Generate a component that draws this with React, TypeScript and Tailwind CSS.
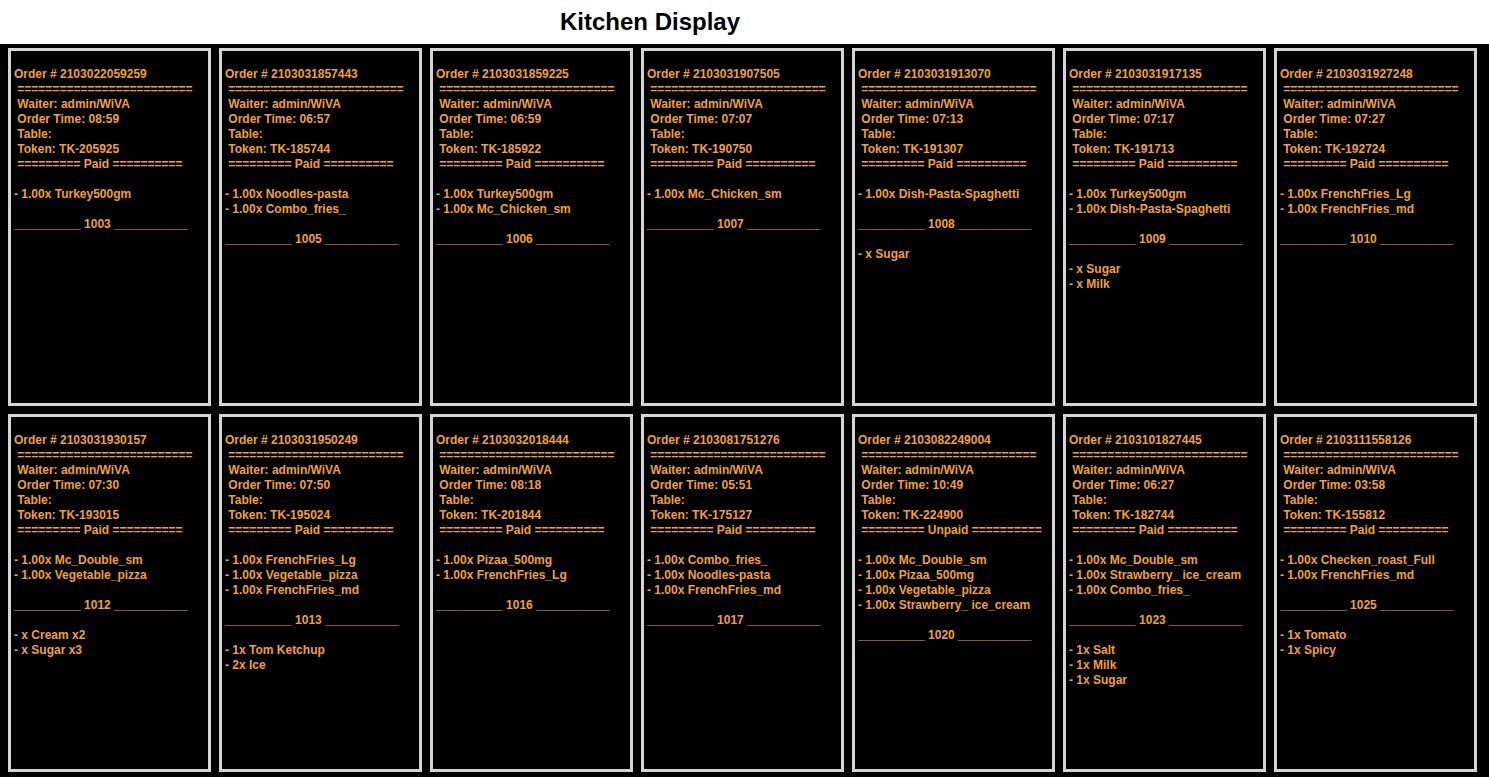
import React from 'react';

type Order = {
  id: string;
  time: string;
  token: string;
  paid: boolean;
  items: string[];
  number: number;
  extras?: string[];
};

const orders: Order[] = [
  { id: '2103022059259', time: '08:59', token: 'TK-205925', paid: true, items: ['Turkey500gm'], number: 1003 },
  { id: '2103031857443', time: '06:57', token: 'TK-185744', paid: true, items: ['Noodles-pasta', 'Combo_fries_'], number: 1005 },
  { id: '2103031859225', time: '06:59', token: 'TK-185922', paid: true, items: ['Turkey500gm', 'Mc_Chicken_sm'], number: 1006 },
  { id: '2103031907505', time: '07:07', token: 'TK-190750', paid: true, items: ['Mc_Chicken_sm'], number: 1007 },
  { id: '2103031913070', time: '07:13', token: 'TK-191307', paid: true, items: ['Dish-Pasta-Spaghetti'], number: 1008, extras: ['x Sugar'] },
  { id: '2103031917135', time: '07:17', token: 'TK-191713', paid: true, items: ['Turkey500gm', 'Dish-Pasta-Spaghetti'], number: 1009, extras: ['x Sugar', 'x Milk'] },
  { id: '2103031927248', time: '07:27', token: 'TK-192724', paid: true, items: ['FrenchFries_Lg', 'FrenchFries_md'], number: 1010 },
  { id: '2103031930157', time: '07:30', token: 'TK-193015', paid: true, items: ['Mc_Double_sm', 'Vegetable_pizza'], number: 1012, extras: ['x Cream x2', 'x Sugar x3'] },
  { id: '2103031950249', time: '07:50', token: 'TK-195024', paid: true, items: ['FrenchFries_Lg', 'Vegetable_pizza', 'FrenchFries_md'], number: 1013, extras: ['1x Tom Ketchup', '2x Ice'] },
  { id: '2103032018444', time: '08:18', token: 'TK-201844', paid: true, items: ['Pizaa_500mg', 'FrenchFries_Lg'], number: 1016 },
  { id: '2103081751276', time: '05:51', token: 'TK-175127', paid: true, items: ['Combo_fries_', 'Noodles-pasta', 'FrenchFries_md'], number: 1017 },
  { id: '2103082249004', time: '10:49', token: 'TK-224900', paid: false, items: ['Mc_Double_sm', 'Pizaa_500mg', 'Vegetable_pizza', 'Strawberry_ ice_cream'], number: 1020 },
  { id: '2103101827445', time: '06:27', token: 'TK-182744', paid: true, items: ['Mc_Double_sm', 'Strawberry_ ice_cream', 'Combo_fries_'], number: 1023, extras: ['1x Salt', '1x Milk', '1x Sugar'] },
  { id: '2103111558126', time: '03:58', token: 'TK-155812', paid: true, items: ['Checken_roast_Full', 'FrenchFries_md'], number: 1025, extras: ['1x Tomato', '1x Spicy'] },
];

const rule = '='.repeat(25);

// ticket printed as plain text lines, like the receipt printer
const ticketLines = (o: Order) => {
  const lines = [
    `Order # ${o.id}`,
    ` ${rule}`,
    ' Waiter: admin/WiVA',
    ` Order Time: ${o.time}`,
    ' Table:',
    ` Token: ${o.token}`,
    ` ${'='.repeat(9)} ${o.paid ? 'Paid' : 'Unpaid'} ${'='.repeat(10)}`,
    '',
    ...o.items.map((i) => `- 1.00x ${i}`),
    '',
    `${'_'.repeat(10)} ${o.number} ${'_'.repeat(11)}`,
  ];
  if (o.extras) {
    lines.push('', ...o.extras.map((e) => `- ${e}`));
  }
  return lines;
};

const OrderCard = ({ order }: { order: Order }) => (
  <div className="w-[203px] h-[358px] border-[3px] border-[#d4d4d4] bg-black pt-[16px] pl-[3px] overflow-hidden">
    {ticketLines(order).map((line, i) => (
      <div key={i} className="whitespace-pre h-[15px] leading-[15px] text-[12px] font-bold text-[#f0a030]">
        {line}
      </div>
    ))}
  </div>
);

export default function App() {
  return (
    <div className="min-h-screen bg-black" style={{ fontFamily: '"Liberation Sans", Arial, sans-serif' }}>
      <header className="h-[44px] bg-white">
        <h1 className="w-[1300px] text-center text-[24px] leading-[44px] font-bold text-black">Kitchen Display</h1>
      </header>
      <main className="flex flex-wrap gap-2 pl-2 pt-1 pb-[6px]">
        {orders.map((o) => (
          <OrderCard key={o.id} order={o} />
        ))}
      </main>
    </div>
  );
}
